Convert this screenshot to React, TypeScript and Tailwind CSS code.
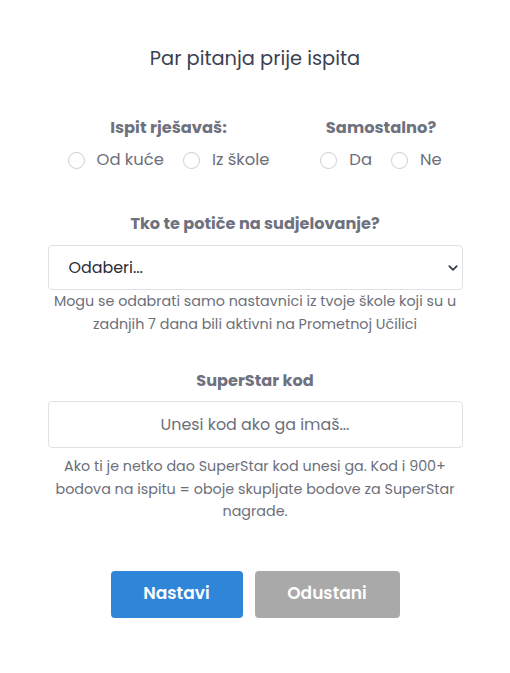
function Radio({ label }: { label: string }) {
  return (
    <label className="flex items-center gap-3">
      <span className="h-[17px] w-[17px] rounded-full border border-[#c9cdd3] bg-white" />
      <span>{label}</span>
    </label>
  )
}

export default function App() {
  return (
    <div className="min-h-[673px] bg-white font-['Poppins','Inter',sans-serif] text-[#6c6f7a]">
      <div className="mx-auto w-[415px] pt-[45px] text-center">
        <h1 className="text-[19.4px] leading-[28px] text-[#3b3f52]">Par pitanja prije ispita</h1>

        {/* Ispit + samostalno */}
        <div className="mt-[43px] flex">
          <div className="flex w-[242px] flex-col items-center">
            <div className="text-[16.3px] font-bold leading-[24px] text-[#6e717e]">Ispit rješavaš:</div>
            <div className="mt-[8px] flex gap-[19px] text-[16.4px] leading-[24px]">
              <Radio label="Od kuće" />
              <Radio label="Iz škole" />
            </div>
          </div>
          <div className="flex flex-1 flex-col items-center pl-[10px]">
            <div className="text-[16.3px] font-bold leading-[24px] text-[#6e717e]">Samostalno?</div>
            <div className="mt-[8px] flex gap-[19px] text-[16.4px] leading-[24px]">
              <Radio label="Da" />
              <Radio label="Ne" />
            </div>
          </div>
        </div>

        {/* Tko te potiče */}
        <div className="mt-[40px] text-[16.1px] font-bold leading-[24px] text-[#6e717e]">Tko te potiče na sudjelovanje?</div>
        <div className="mt-[9px] flex h-[45px] items-center justify-between rounded border border-[#dee2e6] pl-[20px] pr-[4px] text-[15.9px] text-[#2b2d36]">
          <span>Odaberi...</span>
          <svg viewBox="0 0 16 16" className="h-[10px] w-[10px]">
            <path d="M2 5l6 6 6-6" fill="none" stroke="#343a40" strokeWidth="2.6" strokeLinecap="round" strokeLinejoin="round" />
          </svg>
        </div>
        <p className="text-[14.3px] leading-[23px]">
          Mogu se odabrati samo nastavnici iz tvoje škole koji su u<br />
          zadnjih 7 dana bili aktivni na Prometnoj Učilici
        </p>

        {/* SuperStar */}
        <div className="mt-[33px] text-[16.1px] font-bold leading-[24px] text-[#6e717e]">SuperStar kod</div>
        <div className="mt-[8px] flex h-[47px] items-center justify-center rounded border border-[#dee2e6] text-[15.9px] text-[#6c6f7a]">
          Unesi kod ako ga imaš...
        </div>
        <p className="mt-[7px] text-[14.3px] leading-[22.5px]">
          Ako ti je netko dao SuperStar kod unesi ga. Kod i 900+<br />
          bodova na ispitu = oboje skupljate bodove za SuperStar<br />
          nagrade.
        </p>

        {/* Buttons */}
        <div className="mt-[48px] flex justify-center gap-[12px]">
          <button className="h-[47px] w-[132px] rounded bg-[#2f86d8] text-[17px] font-semibold text-white">Nastavi</button>
          <button className="h-[47px] w-[145px] rounded bg-[#a9a9a9] text-[17px] font-semibold text-white">Odustani</button>
        </div>
      </div>
    </div>
  )
}
